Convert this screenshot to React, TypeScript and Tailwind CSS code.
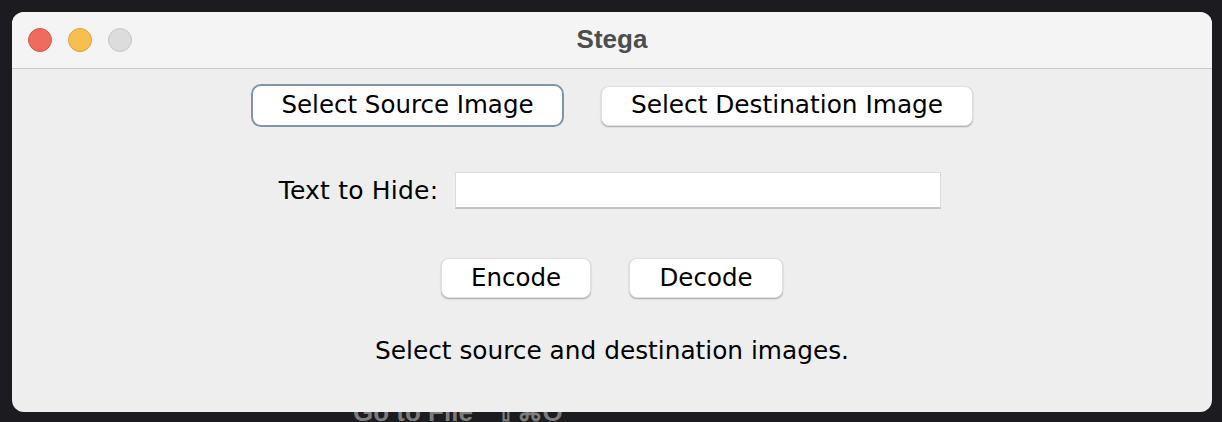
import React from "react";

const font = { fontFamily: '"DejaVu Sans", "Liberation Sans", sans-serif' };

export default function App() {
  return (
    <div className="relative w-[1222px] h-[422px] overflow-hidden bg-[#1c1b1f] p-[12px]">
      <span
        className="absolute left-[353px] top-[399px] text-[26px] leading-[26px] font-bold text-[#7c7c7c] whitespace-pre"
        style={{ fontFamily: '"Liberation Sans", sans-serif' }}
      >
        Go to File   ⇧⌘O
      </span>
      <div className="relative z-10 flex h-[400px] w-[1200px] flex-col overflow-hidden rounded-[12px] bg-[#eeeeee]">
        <div className="relative flex h-[57px] shrink-0 items-center border-b border-[#c9c9c9] bg-[#f4f4f4] pl-[16px]">
          <div className="flex gap-[16px]">
            <div className="h-[24px] w-[24px] rounded-full border border-[#d9564b] bg-[#ef6a5f]" />
            <div className="h-[24px] w-[24px] rounded-full border border-[#d9a23c] bg-[#f6bf4f]" />
            <div className="h-[24px] w-[24px] rounded-full border border-[#c6c6c6] bg-[#dcdcdc]" />
          </div>
          <div
            className="absolute inset-x-0 top-0 flex h-full items-center justify-center pb-[2px] text-[26px] font-bold text-[#4d4d4d]"
            style={{ fontFamily: '"Liberation Sans", sans-serif' }}
          >
            Stega
          </div>
        </div>

        <div className="flex flex-col items-center text-black" style={font}>
          <div className="mt-[15px] flex items-center gap-[37px]">
            <div className="flex h-[43px] w-[313px] items-center justify-center rounded-[10px] border-[2px] border-[#8194ae] bg-white text-[24.5px] leading-none pb-[1px]">
              Select Source Image
            </div>
            <div className="flex h-[40px] w-[372px] items-center justify-center rounded-[8px] border border-[#e0e0e0] bg-white text-[24.8px] leading-none shadow-[0_1px_1.5px_rgba(0,0,0,0.3)]">
              Select Destination Image
            </div>
          </div>

          <div className="mt-[45px] ml-[-4px] flex h-[37px] items-center gap-[17px]">
            <span className="text-[25px] leading-none tracking-[0.2px]">Text to Hide:</span>
            <div className="h-[37px] w-[486px] border-t border-l border-r border-[#dcdcdc] border-b-[2px] border-b-[#c4c4c4] bg-white" />
          </div>

          <div className="mt-[49px] flex items-center gap-[38px]">
            <div className="flex h-[40px] w-[150px] items-center justify-center rounded-[8px] border border-[#e0e0e0] bg-white text-[24.5px] leading-none shadow-[0_1px_1.5px_rgba(0,0,0,0.3)]">
              Encode
            </div>
            <div className="flex h-[40px] w-[154px] items-center justify-center rounded-[8px] border border-[#e0e0e0] bg-white text-[24.5px] leading-none shadow-[0_1px_1.5px_rgba(0,0,0,0.3)]">
              Decode
            </div>
          </div>

          <div className="mt-[38px] text-[24.8px] leading-[30px]">
            Select source and destination images.
          </div>
        </div>
      </div>
    </div>
  );
}
